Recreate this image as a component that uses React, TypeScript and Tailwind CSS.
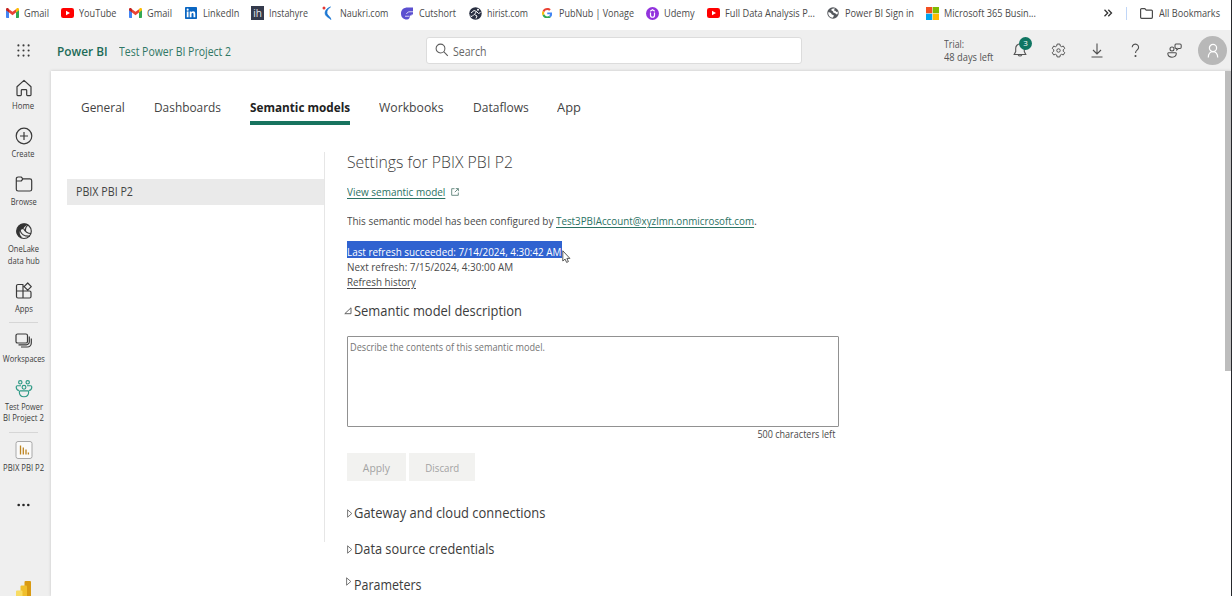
import React from "react";

type Kids = { children?: React.ReactNode };

/* Left-anchored text with a slightly condensed face; `fit` holds the scale class. */
function Text({ fit, className = "", children }: Kids & { fit: string; className?: string }) {
  return <span className={`inline-block origin-left whitespace-nowrap ${fit} ${className}`}>{children}</span>;
}

/* ---------- bookmark icons ---------- */

const GmailIcon = () => (
  <svg width="13" height="10" viewBox="0 0 26 20">
    <path d="M0 3v15.500a1.500 1.500 0 0 0 1.500 1.500H6V8.500z" fill="#4285f4" />
    <path d="M26 3v15.500a1.500 1.500 0 0 1-1.500 1.500H20V8.500z" fill="#34a853" />
    <path d="M20 2.500V9l6-4.500V3c0-2.800-3-3.700-5-2.200z" fill="#fbbc04" />
    <path d="M6 9V2.500l7 5.200 7-5.200V9l-7 5.300z" fill="#ea4335" />
    <path d="M0 3v1.500L6 9V2.500L5 .8C3-.7 0 .2 0 3z" fill="#c5221f" />
  </svg>
);
const YouTubeIcon = () => (
  <svg width="13" height="10" viewBox="0 0 26 20">
    <rect width="26" height="20" rx="4.500" fill="#f00" />
    <path d="M10 5.500v9l8-4.500z" fill="#fff" />
  </svg>
);
const LinkedInIcon = () => (
  <svg width="12" height="12" viewBox="0 0 24 24">
    <rect width="24" height="24" rx="1.500" fill="#0a66c2" />
    <path d="M3.500 9h3.600v11.500H3.500zM9.400 9h3.400v1.600c.6-1 1.800-1.900 3.500-1.900 3.700 0 4.300 2.400 4.300 5.600v6.200H17v-5.500c0-1.300 0-3-1.800-3s-2.200 1.400-2.200 2.900v5.600H9.400z" fill="#fff" />
    <circle cx="5.300" cy="5.300" r="2.100" fill="#fff" />
  </svg>
);
const InstahyreIcon = () => (
  <span className="flex h-[14px] w-[13px] items-center justify-center bg-[#343a4c] text-[10px] leading-none text-[#e6e8ee]">ih</span>
);
const NaukriIcon = () => (
  <svg width="12" height="14" viewBox="0 0 24 28">
    <path d="M17 2C7 5 4 14 8 19c3 4 7 5 10 8-1-5-7-8-8-12-1-5 1-9 7-13z" fill="#1976d2" stroke="#1976d2" strokeWidth="1.500" />
    <circle cx="4" cy="4" r="3" fill="#e53935" />
  </svg>
);
const CutshortIcon = () => (
  <svg width="12" height="13" viewBox="0 0 24 26">
    <path d="M24 1v14h-3v2h-3c0 4-2 8-6 8C4 25 0 20 0 13 0 5 6 1 13 1z" fill="#5b4fd0" />
    <path d="M8 18.500h9M11 14c1-3 3-4.500 7-4.500h6" stroke="#fff" strokeWidth="1.500" fill="none" />
  </svg>
);
const HiristIcon = () => (
  <svg width="13" height="13" viewBox="0 0 26 26">
    <circle cx="13" cy="13" r="12.500" fill="#2a3042" />
    <path d="M4 12l6-5 5 2-4 6 5 3-2 5M15 9l4 4 4-2M10 15l-4 4-3-1" stroke="#fff" strokeWidth="2" fill="none" />
    <circle cx="18" cy="5.500" r="2" fill="#fff" />
  </svg>
);
const GoogleIcon = () => (
  <svg width="10.500" height="10.500" viewBox="0 0 48 48">
    <path fill="#EA4335" d="M24 9.500c3.540 0 6.710 1.220 9.210 3.600l6.850-6.850C35.900 2.380 30.470 0 24 0 14.620 0 6.510 5.380 2.560 13.220l7.980 6.190C12.430 13.720 17.740 9.500 24 9.500z" />
    <path fill="#4285F4" d="M46.980 24.550c0-1.570-.15-3.090-.38-4.550H24v9.020h12.940c-.58 2.960-2.260 5.480-4.780 7.180l7.730 6c4.510-4.180 7.090-10.360 7.090-17.650z" />
    <path fill="#FBBC05" d="M10.530 28.590c-.48-1.450-.76-2.990-.76-4.590s.27-3.140.76-4.590l-7.980-6.190C.92 16.460 0 20.120 0 24c0 3.880.92 7.540 2.560 10.780l7.970-6.190z" />
    <path fill="#34A853" d="M24 48c6.480 0 11.930-2.130 15.890-5.810l-7.730-6c-2.150 1.450-4.920 2.300-8.160 2.300-6.260 0-11.570-4.220-13.470-9.910l-7.980 6.190C6.510 42.620 14.620 48 24 48z" />
  </svg>
);
const UdemyIcon = () => (
  <svg width="13" height="13" viewBox="0 0 26 26">
    <circle cx="13" cy="13" r="13" fill="#9233dd" />
    <path d="M8.500 8.500L13 5.500l4.500 3M9 11v5.500a4 4 0 0 0 8 0V11" stroke="#fff" strokeWidth="2.400" fill="none" />
  </svg>
);
const GlobeIcon = () => (
  <svg width="12" height="12" viewBox="0 0 24 24">
    <circle cx="12" cy="12" r="11.500" fill="#55585d" />
    <path d="M2.500 10.500c2.500 0 4 .5 5.500 2s1 2.500 3 3 3 1 2.500 2.500-1.500 2-2 3.500C6 21 1.800 16.500 2.500 10.500zM9 4.500c1.500-1.500 5-2 7.500-.5-1 .5-2.500.5-2.500 2s3 1 3.500 2.500 2 1.500 4 1c.5 4-1 5.500-1.500 5.500-2 0-2-2-4-2.500s-3-.5-3.500-2.500-1-1.500-2.500-2.500-1.500-2-1-3z" fill="#fff" />
  </svg>
);
const MicrosoftIcon = () => (
  <svg width="13" height="13" viewBox="0 0 26 26">
    <path d="M0 0h12.500v12.500H0z" fill="#f25022" />
    <path d="M13.500 0H26v12.500H13.500z" fill="#7fba00" />
    <path d="M0 13.500h12.500V26H0z" fill="#00a4ef" />
    <path d="M13.500 13.500H26V26H13.500z" fill="#ffb900" />
  </svg>
);

const bookmarks = [
  { icon: <GmailIcon />, label: "Gmail", box: "w-[55px]", fit: "scale-x-[0.92]" },
  { icon: <YouTubeIcon />, label: "YouTube", box: "w-[68px]", fit: "scale-x-[0.912]" },
  { icon: <GmailIcon />, label: "Gmail", box: "w-[56px]", fit: "scale-x-[0.92]" },
  { icon: <LinkedInIcon />, label: "LinkedIn", box: "w-[66px]", fit: "scale-x-[0.917]" },
  { icon: <InstahyreIcon />, label: "Instahyre", box: "w-[71px]", fit: "scale-x-[0.893]" },
  { icon: <NaukriIcon />, label: "Naukri.com", box: "w-[79px]", fit: "scale-x-[0.9]" },
  { icon: <CutshortIcon />, label: "Cutshort", box: "w-[68px]", fit: "scale-x-[0.911]" },
  { icon: <HiristIcon />, label: "hirist.com", box: "w-[72.500px]", fit: "scale-x-[0.886]" },
  { icon: <GoogleIcon />, label: "PubNub | Vonage", box: "w-[104.500px]", fit: "scale-x-[0.898]" },
  { icon: <UdemyIcon />, label: "Udemy", box: "w-[61px]", fit: "scale-x-[0.92]" },
  { icon: <YouTubeIcon />, label: "Full Data Analysis P...", box: "w-[120px]", fit: "scale-x-[0.922]" },
  { icon: <GlobeIcon />, label: "Power BI Sign in", box: "w-[99px]", fit: "scale-x-[0.922]" },
  { icon: <MicrosoftIcon />, label: "Microsoft 365 Busin...", box: "w-[177px]", fit: "scale-x-[0.916]" },
];

function BookmarkBar() {
  return (
    <div className="flex h-[30px] shrink-0 items-center bg-white pb-[4px] pl-[6px] text-[10px] text-[#4a4a4a]">
      {bookmarks.map((b, i) => (
        <div key={i} className={`flex shrink-0 items-center whitespace-nowrap ${b.box}`}>
          <span className="flex h-[14px] w-[17.500px] shrink-0 items-center">{b.icon}</span>
          <Text fit={b.fit}>{b.label}</Text>
        </div>
      ))}
      <svg className="shrink-0" width="10" height="8" viewBox="0 0 10 8" fill="none" stroke="#333" strokeWidth="1.300">
        <path d="M1.500 .8L4.700 4 1.500 7.200M5.300 .8L8.500 4 5.300 7.200" />
      </svg>
      <div className="ml-[13px] h-[13px] w-px shrink-0 bg-[#c0d6f7]" />
      <svg className="mr-[6px] ml-[13px] shrink-0" width="13" height="11" viewBox="0 0 13 11" fill="none" stroke="#4a4a4a" strokeWidth="1.200">
        <path d="M.6 1.600a1 1 0 0 1 1-1h3.200l1.400 1.500h5.200a1 1 0 0 1 1 1v6.200a1 1 0 0 1-1 1H1.600a1 1 0 0 1-1-1z" />
      </svg>
      <Text fit="scale-x-[0.916]">All Bookmarks</Text>
    </div>
  );
}

/* ---------- header ---------- */

function Header() {
  return (
    <header className="flex h-[40px] shrink-0 items-center bg-[#efefef]">
      <svg className="ml-[17px] shrink-0" width="13" height="13" viewBox="0 0 13 13" fill="#3c3c3c">
        {[1.4, 6.5, 11.6].map((y) => [1.4, 6.5, 11.6].map((x) => <circle key={`${x}-${y}`} cx={x} cy={y} r="1.050" />))}
      </svg>
      <div className="ml-[27px] w-[62px] shrink-0 pt-[3px] text-[13px] font-semibold text-[#1c6b57]">
        <Text fit="scale-x-[0.91]">Power BI</Text>
      </div>
      <div className="w-[307px] shrink-0 pt-[3px] text-[12px] text-[#2f7765]">
        <Text fit="scale-x-[0.873]">Test Power BI Project 2</Text>
      </div>
      <div className="flex h-[27px] w-[376px] shrink-0 items-center rounded-[3px] border border-[#dcdcdc] bg-white pl-[8px]">
        <svg width="14" height="14" viewBox="0 0 14 14" fill="none" stroke="#5c5c5c" strokeWidth="1.050">
          <circle cx="5.500" cy="5.500" r="4.400" />
          <path d="M8.700 8.700L12.800 12.800" />
        </svg>
        <Text fit="scale-x-[0.88]" className="ml-[4px] pt-[3px] text-[12px] text-[#666]">Search</Text>
      </div>
      <div className="ml-[142px] w-[69px] shrink-0 pt-[2px] text-[10px] leading-[13.500px] text-[#555]">
        <Text fit="scale-x-[0.88]" className="block">Trial:</Text>
        <Text fit="scale-x-[0.93]" className="block">48 days left</Text>
      </div>
      <div className="relative h-[17px] w-[38px] shrink-0">
        <svg width="14" height="17" viewBox="0 0 14 17" fill="none" stroke="#555" strokeWidth="1.100">
          <path d="M7 2a4.300 4.300 0 0 0-4.300 4.300V9.500L1.200 12.500h11.600L11.300 9.500V6.300A4.300 4.300 0 0 0 7 2zM5.200 12.700a1.900 1.900 0 0 0 3.600 0" />
        </svg>
        <span className="absolute -top-[5px] left-[6px] flex size-[13px] items-center justify-center rounded-full bg-[#0f7562] text-[8px] leading-none text-white">3</span>
      </div>
      <svg className="shrink-0" width="15" height="15" viewBox="0 0 20 20" fill="none" stroke="#4f4f4f" strokeWidth="1.300" strokeLinejoin="round">
        <path d="M8.200 1.400h3.600l.6 2.600 1.500.9 2.600-.8 1.800 3.100-2 1.900v1.800l2 1.900-1.800 3.100-2.600-.8-1.500.9-.6 2.600H8.200L7.600 16l-1.500-.9-2.600.8-1.800-3.100 2-1.900V9.100l-2-1.900 1.800-3.100 2.600.8L7.600 4z" />
        <circle cx="10" cy="10" r="2.300" />
      </svg>
      <svg className="ml-[25px] shrink-0" width="13" height="15" viewBox="0 0 13 15" fill="none" stroke="#4f4f4f" strokeWidth="1.100">
        <path d="M6 .5v10.500M2 7l4 4 4-4M.5 14h11" />
      </svg>
      <svg className="ml-[27px] shrink-0" width="9" height="15" viewBox="0 0 9 15" fill="none" stroke="#4f4f4f" strokeWidth="1.100">
        <path d="M1.200 4.200a3.200 3.200 0 1 1 5.200 2.600C5.200 7.800 4.500 8.300 4.500 10" />
        <circle cx="4.500" cy="13" r=".5" fill="#4f4f4f" />
      </svg>
      <svg className="ml-[27px] shrink-0" width="15" height="15" viewBox="0 0 15 15" fill="none" stroke="#4f4f4f" strokeWidth="1.050">
        <circle cx="5" cy="6" r="2" />
        <path d="M1.500 9.800h7a.8.8 0 0 1 .8.8c0 2.300-1.700 3.600-4.300 3.600S.8 12.900.8 10.600a.8.8 0 0 1 .7-.8zM9 1h4a1.200 1.200 0 0 1 1.200 1.200v2A1.200 1.200 0 0 1 13 5.400h-1.500L9.800 7V5.400A1.300 1.300 0 0 1 8 4.200v-2A1.200 1.200 0 0 1 9 1z" />
      </svg>
      <div className="mt-px ml-[16px] flex size-[29px] shrink-0 items-center justify-center rounded-full bg-[#b8b8b8]">
        <svg width="14" height="15" viewBox="0 0 14 15" fill="none" stroke="#fff" strokeWidth="1.200">
          <circle cx="7" cy="5" r="3.600" />
          <path d="M2.300 14.500c0-3.500 2-5.900 4.700-5.900s4.700 2.400 4.700 5.900" />
        </svg>
      </div>
    </header>
  );
}

/* ---------- side navigation ---------- */

function NavItem({ icon, lines, className }: { icon: React.ReactNode; lines: [string, string][]; className: string }) {
  return (
    <div className={`flex shrink-0 flex-col items-center pt-[3px] ${className}`}>
      <div className="mb-[3px] flex h-[18px] items-center">{icon}</div>
      {lines.map(([text, fit]) => (
        <div key={text} className={`h-[11.500px] text-[8.500px] leading-[11.500px] whitespace-nowrap text-[#3c3c3c] ${fit}`}>{text}</div>
      ))}
    </div>
  );
}

const Glyph = ({ children }: Kids) => (
  <svg width="18" height="18" viewBox="0 0 18 18" fill="none" stroke="#3a3a3a" strokeWidth="1.200" strokeLinejoin="round">{children}</svg>
);

function SideNav() {
  return (
    <nav className="flex w-[51px] shrink-0 flex-col overflow-hidden bg-[#efefef] pt-[5.500px] pr-[4px]">
      <NavItem className="h-[48px]" lines={[["Home", "scale-x-[0.917]"]]} icon={
        <Glyph><path d="M2 7.800L9 1.400l7 6.400v8a.8.8 0 0 1-.8.800h-2.700a.8.8 0 0 1-.8-.8v-4.300a.8.8 0 0 0-.8-.8H7.100a.8.8 0 0 0-.8.8v4.300a.8.8 0 0 1-.8.8H2.800a.8.8 0 0 1-.8-.8z" /></Glyph>
      } />
      <NavItem className="h-[48px]" lines={[["Create", "scale-x-[0.88]"]]} icon={
        <Glyph><circle cx="9" cy="9" r="7.800" /><path d="M9 5v8M5 9h8" /></Glyph>
      } />
      <NavItem className="h-[47.500px]" lines={[["Browse", "scale-x-[0.88]"]]} icon={
        <Glyph><path d="M1.300 3.800a1.800 1.800 0 0 1 1.800-1.800h3L8 3.900h6.900a1.800 1.800 0 0 1 1.800 1.800v8.500a1.800 1.800 0 0 1-1.800 1.800H3.100a1.800 1.800 0 0 1-1.800-1.800zM1.300 6h4.900L8 3.900" /></Glyph>
      } />
      <NavItem className="h-[59.500px]" lines={[["OneLake", "scale-x-[0.886]"], ["data hub", "scale-x-[0.9]"]]} icon={
        <Glyph>
          <circle cx="9" cy="9.200" r="7.300" />
          <path d="M3 5C5 1.200 10 .4 13.500 2.700c-2.500.6-4.300 2-5.300 4.300C5.500 7.500 4.500 9 4.700 11c.2 1.800 1.200 3 2.800 4.800C3.500 15.500 1 12 1.500 8.500z" fill="#333" stroke="none" />
          <path d="M5 7.500c.5 4.500 4.500 7 10 6.500" />
          <path d="M8.500 6.500c1.500 3 4 5 7.500 5M13.500 3c-2 .8-3.300 3-3 6" />
        </Glyph>
      } />
      <NavItem className="h-[43.500px]" lines={[["Apps", "scale-x-[0.91]"]]} icon={
        <Glyph><path d="M3 2.500h5v6.500H1.500V4A1.500 1.500 0 0 1 3 2.500zM1.500 9H8v7H3a1.500 1.500 0 0 1-1.500-1.500zM8 9h6.500A1.500 1.500 0 0 1 16 10.500v4a1.500 1.500 0 0 1-1.500 1.500H8zM12.700 1l3.600 3.600-3.600 3.600-3.600-3.600z" /></Glyph>
      } />
      <div className="mx-auto h-px w-[29px] shrink-0 bg-[#d6d6d6]" />
      <NavItem className="mt-[6px] h-[47.500px]" lines={[["Workspaces", "scale-x-[0.88]"]]} icon={
        <Glyph><rect x="1" y="2" width="11.500" height="9" rx="1.600" /><path d="M14.300 4.500v5.300a3 3 0 0 1-3 3H3.500M16.300 6.500v4.500a4 4 0 0 1-4 4H6" /></Glyph>
      } />
      <NavItem className="h-[55.500px]" lines={[["Test Power", "scale-x-[0.868]"], ["BI Project 2", "scale-x-[0.913]"]]} icon={
        <svg width="18" height="20" viewBox="0 0 18 20" fill="none" stroke="#2f9a86" strokeWidth="1.150">
          <circle cx="5.300" cy="3.300" r="1.700" /><circle cx="12.700" cy="3.300" r="1.700" /><circle cx="9" cy="8.300" r="1.900" />
          <path d="M6 6.700H2.400a1.200 1.200 0 0 0-1.200 1.200c0 2 1 3.200 2.800 3.600M12 6.700h3.600a1.200 1.200 0 0 1 1.200 1.200c0 2-1 3.200-2.800 3.600M5.200 11.800h7.600a.9.900 0 0 1 .9.900c0 3-1.800 5-4.700 5s-4.700-2-4.700-5a.9.900 0 0 1 .9-.9z" />
        </svg>
      } />
      <div className="mx-auto h-px w-[29px] shrink-0 bg-[#d6d6d6]" />
      <NavItem className="mt-[5px] h-[64.500px]" lines={[["PBIX PBI P2", "scale-x-[0.907]"]]} icon={
        <svg width="18" height="18" viewBox="0 0 18 18">
          <rect x="1" y=".5" width="16" height="17" rx="2" fill="#fafafa" stroke="#a8a8a8" />
          <path d="M5.500 4.500v9M8.300 6.500v7M11 8.500v5M13.400 11.500v2" stroke="#bd8420" strokeWidth="1.300" />
        </svg>
      } />
      <svg className="mx-auto shrink-0" width="13" height="4" viewBox="0 0 13 4" fill="#262626">
        <circle cx="1.700" cy="2" r="1.300" /><circle cx="6.500" cy="2" r="1.300" /><circle cx="11.300" cy="2" r="1.300" />
      </svg>
      <svg className="mt-auto ml-[16px] shrink-0" width="15" height="15" viewBox="0 0 15 15">
        <path d="M8.500 1a1 1 0 0 1 1-1H14a1 1 0 0 1 1 1v14H8.500z" fill="#d99a12" />
        <path d="M4.500 5.500a1 1 0 0 1 1-1H10a1 1 0 0 1 1 1V15H4.500z" fill="#f0bf2c" />
        <path d="M0 10.500a1 1 0 0 1 1-1h4.500a1 1 0 0 1 1 1V15H0z" fill="#f8dc63" />
      </svg>
    </nav>
  );
}

/* ---------- content ---------- */

const tabs = [
  { label: "General", box: "mr-[29px] w-[44px]", fit: "scale-x-[0.915]" },
  { label: "Dashboards", box: "mr-[29px] w-[67px]", fit: "scale-x-[0.914]" },
  { label: "Semantic models", box: "mr-[29px] w-[100px]", fit: "scale-x-[0.903]", active: true },
  { label: "Workbooks", box: "mr-[29px] w-[64.500px]", fit: "scale-x-[0.94]" },
  { label: "Dataflows", box: "mr-[29px] w-[55.500px]", fit: "scale-x-[0.925]" },
  { label: "App", box: "w-[24px]", fit: "scale-x-[0.99]" },
];

function Section({ label, fit, raised }: { label: string; fit: string; raised?: boolean }) {
  return (
    <div className="flex h-[36px] items-center">
      <svg className={`mr-px w-[6px] shrink-0 ${raised ? "mb-[7px] -ml-px box-content pr-px" : ""}`} height="9" viewBox="0 0 6 9" fill="none" stroke="#555" strokeWidth=".8">
        <path d="M.6 .8v7.400L4.800 4.500z" />
      </svg>
      <Text fit={fit} className="text-[14.500px] text-[#3c3c3c]">{label}</Text>
    </div>
  );
}

const link = "text-[#2b7263] underline underline-offset-[1.500px]";

function Settings() {
  return (
    <section className="ml-[22px] w-[493px] shrink-0 text-[11px] whitespace-nowrap text-[#4a4a4a]">
      <h1 className="h-[20px] text-[17px] leading-[20px] font-light text-[#3c3c3c]">
        <Text fit="scale-x-[0.93]">Settings for PBIX PBI P2</Text>
      </h1>
      <div className="mt-[12px] flex h-[16px] items-center">
        <div className="w-[104px]"><a><Text fit="scale-x-[0.905]" className={link}>View semantic model</Text></a></div>
        <svg width="8" height="8" viewBox="0 0 8 8" fill="none" stroke="#5d8279" strokeWidth=".9">
          <path d="M3.500 .7H.7v6.600h6.600V4.500M4.800 .6h2.600v2.600M7.300 .7L3.800 4.200" />
        </svg>
      </div>
      <div className="mt-[13px] flex h-[16px] leading-[16px]">
        <div className="w-[209px]"><Text fit="scale-x-[0.904]">This semantic model has been configured by</Text></div>
        <div className="w-[198px]"><a><Text fit="scale-x-[0.892]" className={link}>Test3PBIAccount@xyzlmn.onmicrosoft.com</Text></a></div>
        <span>.</span>
      </div>
      <div className="relative mt-[12px] h-[17px] w-[215px] bg-[#2f62d0] pt-[2.500px] leading-[16px] text-white">
        <Text fit="scale-x-[0.898]">Last refresh succeeded: 7/14/2024, 4:30:42 AM</Text>
        <svg className="absolute top-[9px] left-[215px]" width="10" height="15" viewBox="0 0 10 15">
          <path d="M.8 .8v10.200l2.300-1.900 1.500 3.300 1.800-.8-1.500-3.200h3z" fill="#fff" stroke="#444" strokeWidth=".9" />
        </svg>
      </div>
      <div className="mt-px h-[15px] leading-[15px]"><Text fit="scale-x-[0.9]">Next refresh: 7/15/2024, 4:30:00 AM</Text></div>
      <div className="h-[15px] leading-[15px]"><a><Text fit="scale-x-[0.89]" className="underline underline-offset-[1.500px]">Refresh history</Text></a></div>
      <div className="mt-[11px] -ml-[3px] flex h-[22px] items-center">
        <svg className="mr-[2px] shrink-0" width="8" height="8" viewBox="0 0 8 8" fill="none" stroke="#555" strokeWidth=".9">
          <path d="M.8 6.700h6.200V.8z" />
        </svg>
        <Text fit="scale-x-[0.892]" className="text-[14.500px] text-[#3c3c3c]">Semantic model description</Text>
      </div>
      <div className="mt-[14px] h-[91px] w-[492px] rounded-[1px] border border-[#919191] pt-[3px] pl-[2px] text-[10px] leading-[14px] text-[#757575]">
        <Text fit="scale-x-[0.915]">Describe the contents of this semantic model.</Text>
      </div>
      <div className="flex h-[14px] justify-end pr-[5px] text-[10px] leading-[14px]">
        <span className="origin-right scale-x-[0.903]">500 characters left</span>
      </div>
      <div className="mt-[12px] mb-[14px] flex h-[28px] gap-[3px] text-[#a3a3a3]">
        <button className="w-[59px] bg-[#f2f2f0] pt-[2px]"><span className="inline-block scale-x-[0.94]">Apply</span></button>
        <button className="w-[66px] bg-[#f2f2f0] pt-[2px]"><span className="inline-block scale-x-[0.88]">Discard</span></button>
      </div>
      <Section label="Gateway and cloud connections" fit="scale-x-[0.892]" />
      <Section label="Data source credentials" fit="scale-x-[0.882]" />
      <Section label="Parameters" fit="scale-x-[0.86]" raised />
    </section>
  );
}

export default function App() {
  return (
    <div className="flex h-[596px] w-[1232px] overflow-hidden bg-white font-['Open_Sans',sans-serif]">
      <div className="flex w-[1231px] shrink-0 flex-col overflow-hidden">
        <BookmarkBar />
        <Header />
        <div className="flex h-[526px] bg-[#efefef]">
          <SideNav />
          <main className="z-10 mt-px flex h-[525px] grow overflow-hidden bg-white shadow-[0_0_3px_rgba(0,0,0,0.18)]">
            <div className="grow">
              <div className="flex h-[55px] pt-[25px] pl-[30px] text-[13px] text-[#444]">
                {tabs.map((t) => (
                  <div key={t.label} className={`h-[29px] shrink-0 leading-[23px] ${t.box} ${t.active ? "border-b-[4px] border-[#18735f] font-bold text-[#222]" : ""}`}>
                    <Text fit={t.fit}>{t.label}</Text>
                  </div>
                ))}
              </div>
              <div className="mt-[26px] flex h-[444px]">
                <aside className="ml-[16px] h-[390px] w-[258px] shrink-0 border-r border-[#e6e6e6] pt-[27px]">
                  <div className="flex h-[26px] items-center bg-[#eaeaea] pl-[9px] text-[12px] text-[#444]">
                    <Text fit="scale-x-[0.892]">PBIX PBI P2</Text>
                  </div>
                </aside>
                <Settings />
              </div>
            </div>
            <div className="h-[300px] w-[6px] shrink-0 bg-[#bdbdbd]" />
          </main>
        </div>
      </div>
      <div className="w-px bg-[#26282c]" />
    </div>
  );
}
